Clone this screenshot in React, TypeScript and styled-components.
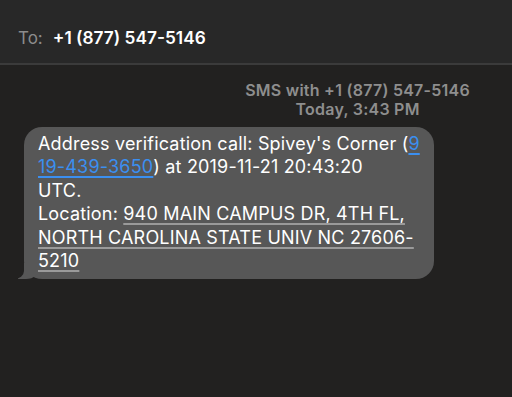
import React from "react"
import styled, { createGlobalStyle } from "styled-components"

const GlobalStyle = createGlobalStyle`
  html, body {
    margin: 0;
    padding: 0;
    background: #222120;
  }
  body {
    font-family: Inter, "Liberation Sans", Arial, sans-serif;
    -webkit-font-smoothing: antialiased;
  }
`

const Page = styled.div`
  width: 512px;
  height: 397px;
  display: flex;
  flex-direction: column;
  background: #222120;
  overflow: hidden;
`

const Header = styled.div`
  height: 65px;
  display: flex;
  align-items: center;
  gap: 10px;
  padding: 12px 18px 0;
  box-sizing: border-box;
  background: #282828;
  border-bottom: 2px solid #3b3b3b;
`

const ToLabel = styled.span`
  color: #8c8c8c;
  font-size: 17px;
`

const Recipient = styled.span`
  color: #ffffff;
  font-size: 17.3px;
  font-weight: 600;
`

const Thread = styled.div`
  display: flex;
  flex-direction: column;
  padding: 16px 0 0 18px;
`

const Meta = styled.div`
  align-self: flex-end;
  margin-right: 42px;
  text-align: center;
  color: #8e8e8e;
  font-size: 16px;
  font-weight: 600;
  line-height: 19px;
  letter-spacing: 0.25px;
`

const BubbleRow = styled.div`
  display: flex;
  margin-top: 8px;
`

const Bubble = styled.div`
  position: relative;
  margin-left: 6px;
  width: 410px;
  box-sizing: border-box;
  padding: 5px 14px 7px 14px;
  background: #575757;
  border-radius: 18px;
  color: #ffffff;
  font-size: 18px;
  line-height: 23.4px;
  letter-spacing: 0.18px;

  &::before {
    content: "";
    position: absolute;
    left: -6px;
    bottom: 0;
    width: 22px;
    height: 16px;
    background: #575757;
    border-bottom-right-radius: 14px 12px;
  }
  &::after {
    content: "";
    position: absolute;
    left: -14px;
    bottom: 0;
    width: 14px;
    height: 20px;
    background: #222120;
    border-bottom-right-radius: 10px 8px;
  }
`

const Body = styled.div`
  position: relative;
  z-index: 1;
`

const Link = styled.a<{ $tone?: "blue" | "plain" }>`
  color: ${(p) => (p.$tone === "blue" ? "#3b8ff0" : "#ffffff")};
  text-decoration: underline;
  text-decoration-color: ${(p) => (p.$tone === "blue" ? "#3b8ff0" : "#9a9a9a")};
  text-underline-offset: 3px;
  text-decoration-thickness: 2px;
`

export default function App() {
  return (
    <>
      <GlobalStyle />
      <Page>
        <Header>
          <ToLabel>To:</ToLabel>
          <Recipient>+1 (877) 547-5146</Recipient>
        </Header>
        <Thread>
          <Meta>
            SMS with +1 (877) 547-5146
            <br />
            Today, 3:43 PM
          </Meta>
          <BubbleRow>
            <Bubble>
              <Body>
                Address verification call: Spivey's Corner (
                <Link $tone="blue">
                  9<br />
                  19-439-3650
                </Link>
                ) at 2019-11-21 20:43:20
                <br />
                UTC.
                <br />
                Location:{" "}
                <Link>
                  940 MAIN CAMPUS DR, 4TH FL,
                  <br />
                  NORTH CAROLINA STATE UNIV NC 27606-
                  <br />
                  5210
                </Link>
              </Body>
            </Bubble>
          </BubbleRow>
        </Thread>
      </Page>
    </>
  )
}
